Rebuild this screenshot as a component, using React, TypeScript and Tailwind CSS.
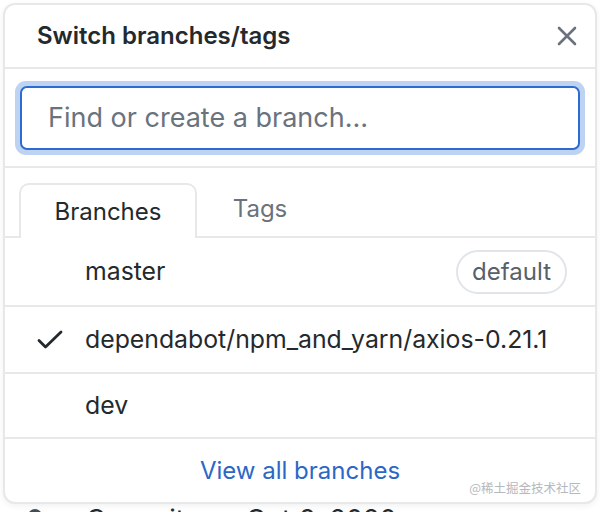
import React from "react";

const BRANCHES = [
  { name: "master", isDefault: true, checked: false, h: "h-[69px]" },
  { name: "dependabot/npm_and_yarn/axios-0.21.1", isDefault: false, checked: true, h: "h-[67px]" },
  { name: "dev", isDefault: false, checked: false, h: "h-[65px]" },
];

function CheckIcon() {
  return (
    <svg width="26" height="20" viewBox="0 0 26 20" fill="none">
      <path d="M2 10.5 L8.5 17 L24 2" stroke="#24292e" strokeWidth="2.8" strokeLinecap="round" strokeLinejoin="round" />
    </svg>
  );
}

function CloseIcon() {
  return (
    <svg width="20" height="20" viewBox="0 0 20 20" fill="none">
      <path d="M2 2 L18 18 M18 2 L2 18" stroke="#6a737d" strokeWidth="2.6" strokeLinecap="round" />
    </svg>
  );
}

export default function App() {
  return (
    <div
      className="h-[512px] w-[600px] overflow-hidden bg-white"
      style={{ fontFamily: "Inter, 'Liberation Sans', sans-serif" }}
    >
      <div className="ml-[3px] mt-[3px] w-[594px] rounded-[12px] border-2 border-[#e7e8ea] bg-white shadow-[0_2px_6px_rgba(0,0,0,0.06)]">
        {/* header */}
        <div className="flex h-[64px] items-center justify-between border-b-2 border-[#e7e8ea] pl-[32px] pr-[18px]">
          <span className="text-[24px] font-semibold text-[#24292e]">Switch branches/tags</span>
          <CloseIcon />
        </div>

        {/* filter */}
        <div className="border-b-2 border-[#e7e8ea] px-[10px] pb-[11px] pt-[12px]">
          <div className="rounded-[11px] bg-[#bed3f2] p-[5px]">
            <div className="flex h-[64px] items-center rounded-[7px] border-2 border-[#2d6bd0] bg-white px-[26px]">
              <span className="text-[27px] text-[#6a737d]">Find or create a branch…</span>
            </div>
          </div>
        </div>

        {/* tabs */}
        <div className="flex h-[70px] items-end border-b-2 border-[#e7e8ea] pl-[14px]">
          <div className="relative -mb-[2px] flex h-[55px] w-[178px] items-center justify-center rounded-t-[10px] border-2 border-b-0 border-[#e7e8ea] bg-white">
            <span className="text-[24px] text-[#24292e]">Branches</span>
          </div>
          <div className="flex h-[55px] w-[126px] items-center justify-center">
            <span className="text-[24px] text-[#6a737d]">Tags</span>
          </div>
        </div>

        {/* branch list */}
        {BRANCHES.map((b) => (
          <div
            key={b.name}
            className={`flex ${b.h} items-center border-b-2 border-[#e7e8ea] pl-[32px] pr-[28px]`}
          >
            <div className="flex w-[48px] items-center">{b.checked && <CheckIcon />}</div>
            <span className="flex-1 text-[24.8px] text-[#24292e]">{b.name}</span>
            {b.isDefault && (
              <span className="rounded-full border-2 border-[#e1e4e8] px-[14px] py-[2px] text-[24px] text-[#586069]">
                default
              </span>
            )}
          </div>
        ))}

        {/* footer */}
        <div className="relative flex h-[63px] items-center justify-center">
          <span className="text-[24px] text-[#2b67c6]">View all branches</span>
          <span
            className="absolute bottom-[4px] right-[14px] text-[12.5px] text-[#b5b8bd]"
            style={{ fontFamily: "'Noto Sans CJK SC', sans-serif" }}
          >
            @稀土掘金技术社区
          </span>
        </div>
      </div>

      {/* page behind */}
      <div className="mt-[2px] flex items-start gap-[44px] pl-[28px]">
        <span className="mt-[3px] h-[14px] w-[14px] shrink-0 rounded-full bg-[#444d56]" />
        <span className="text-[27px] leading-[28px] text-[#24292e]">Commits on Oct 6, 2020</span>
      </div>
    </div>
  );
}
